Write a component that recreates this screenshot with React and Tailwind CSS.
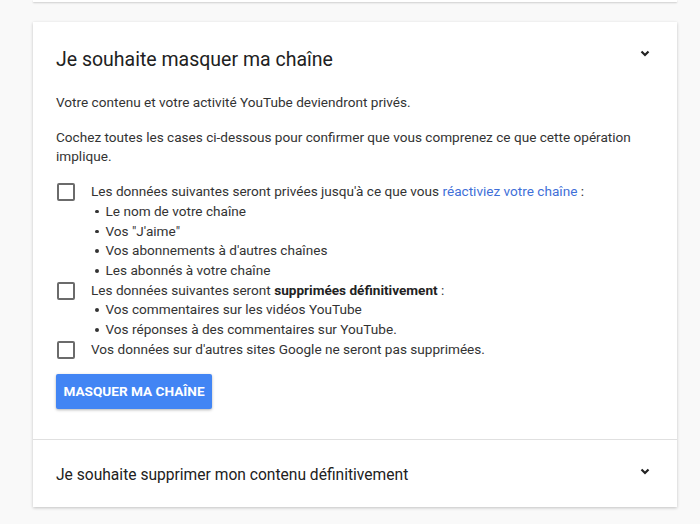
const font = { fontFamily: 'Roboto, "Liberation Sans", sans-serif' }

function Chevron() {
  return (
    <svg width="10" height="7" viewBox="0 0 10 7" className="text-[#222]">
      <path d="M1.5 1.5 L5 5 L8.5 1.5" fill="none" stroke="currentColor" strokeWidth="2.2" />
    </svg>
  )
}

function Box() {
  return <span className="mt-[1px] h-[18px] w-[18px] shrink-0 rounded-[2px] border-2 border-[#6b6b6b] bg-white" />
}

function Bullet({ children }) {
  return (
    <div className="flex items-center">
      <span className="ml-[4px] mr-[7px] h-[3.5px] w-[3.5px] rounded-full bg-[#333]" />
      <span>{children}</span>
    </div>
  )
}

function Row({ children, items }) {
  return (
    <div className="flex gap-[16px]">
      <Box />
      <div>
        <div>{children}</div>
        {items && items.map((t) => <Bullet key={t}>{t}</Bullet>)}
      </div>
    </div>
  )
}

export default function App() {
  return (
    <div className="min-h-[524px] w-[700px] bg-[#f9f9f9]" style={font}>
      <div className="ml-[33px] mr-[23px] h-[2px] bg-white shadow-[0_1px_2px_rgba(0,0,0,0.18)]" />
      <div className="ml-[33px] mr-[23px] mt-[20px] bg-white shadow-[0_1px_3px_rgba(0,0,0,0.22)]">
        <div className="flex h-[71px] items-center justify-between pl-[23px] pr-[27px]">
          <h2 className="pt-[4px] text-[19.5px] text-[#212121]">Je souhaite masquer ma chaîne</h2>
          <div className="-mt-[8px]"><Chevron /></div>
        </div>
        <div className="px-[23px] pb-[30px] text-[13.6px] leading-[19.7px] text-[#333]">
          <p>Votre contenu et votre activité YouTube deviendront privés.</p>
          <p className="mt-[15px]">Cochez toutes les cases ci-dessous pour confirmer que vous comprenez ce que cette opération implique.</p>
          <div className="mt-[15px] pl-[1px]">
            <Row items={['Le nom de votre chaîne', 'Vos "J\'aime"', "Vos abonnements à d'autres chaînes", 'Les abonnés à votre chaîne']}>
              Les données suivantes seront privées jusqu'à ce que vous <span className="text-[#3f6fd8]">réactiviez votre chaîne</span> :
            </Row>
            <Row items={['Vos commentaires sur les vidéos YouTube', 'Vos réponses à des commentaires sur YouTube.']}>
              Les données suivantes seront <b className="font-bold text-[#222]">supprimées définitivement</b> :
            </Row>
            <Row>Vos données sur d'autres sites Google ne seront pas supprimées.</Row>
          </div>
          <button className="mt-[15px] h-[35px] w-[156px] rounded-[2px] bg-[#4285f4] text-[13.6px] font-bold text-white shadow-[0_1px_3px_rgba(0,0,0,0.3)]">
            MASQUER MA CHAÎNE
          </button>
        </div>
        <div className="flex h-[68px] items-center justify-between border-t border-[#e0e0e0] pl-[23px] pr-[27px]">
          <h3 className="pt-[3px] text-[15.6px] text-[#212121]">Je souhaite supprimer mon contenu définitivement</h3>
          <div className="-mt-[4px]"><Chevron /></div>
        </div>
      </div>
    </div>
  )
}
